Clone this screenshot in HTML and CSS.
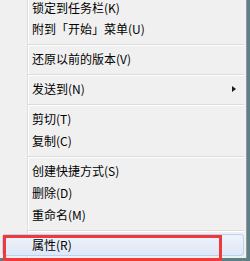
FILE: index.html
```html
<!DOCTYPE html>
<html>
<head>
<meta charset="utf-8">
<link rel="stylesheet" href="styles.css">
</head>
<body>
<div class="menu">
  <div class="item first">锁定到任务栏(K)</div>
  <div class="item">附到「开始」菜单(U)</div>
  <div class="sep"></div>
  <div class="item">还原以前的版本(V)</div>
  <div class="sep"></div>
  <div class="item sub">发送到(N)<span class="arrow"></span></div>
  <div class="sep"></div>
  <div class="item">剪切(T)</div>
  <div class="item">复制(C)</div>
  <div class="sep"></div>
  <div class="item">创建快捷方式(S)</div>
  <div class="item">删除(D)</div>
  <div class="item">重命名(M)</div>
  <div class="sep"></div>
  <div class="item hot">属性(R)</div>
  <div class="mark"></div>
</div>
</body>
</html>
```
FILE: styles.css
```css
html, body {
  margin: 0;
  padding: 0;
  background: #5a8088;
  width: 250px;
  height: 261px;
  overflow: hidden;
}
.menu {
  position: relative;
  width: 246px;
  padding-bottom: 2px;
  border-right: 1px solid #979797;
  background:
    linear-gradient(to right, transparent 27px, #dcdddd 27px, #dcdddd 28px, #ffffff 28px, #ffffff 29px, transparent 29px),
    #f0f0f0;
  font-family: "Noto Sans CJK SC", "Noto Sans", sans-serif;
  font-size: 12px;
  color: #000;
}
.item {
  position: relative;
  height: 22px;
  line-height: 22px;
  margin: 0 2px;
  box-sizing: border-box;
  padding-left: 30px;
}
.item.first {
  height: 18px;
  line-height: 16px;
}
.sep {
  height: 8px;
  margin-left: 28px;
  margin-right: 2px;
  box-sizing: border-box;
  padding-top: 4px;
}
.sep::before {
  content: "";
  display: block;
  height: 1px;
  background: #dcdcdc;
  border-bottom: 1px solid #ffffff;
}
.arrow {
  position: absolute;
  right: 8px;
  top: 8px;
  width: 0;
  height: 0;
  border-left: 4px solid #1a1a1a;
  border-top: 3.5px solid transparent;
  border-bottom: 3.5px solid transparent;
}
.hot {
  border: 1px solid #b8d2f4;
  border-radius: 3px;
  background: linear-gradient(#eef3fb, #dfe8f6);
  line-height: 20px;
  padding-left: 29px;
}
.mark {
  position: absolute;
  left: 3px;
  bottom: -3px;
  width: 213px;
  height: 20px;
  border: 3px solid #f03a3a;
}
```
